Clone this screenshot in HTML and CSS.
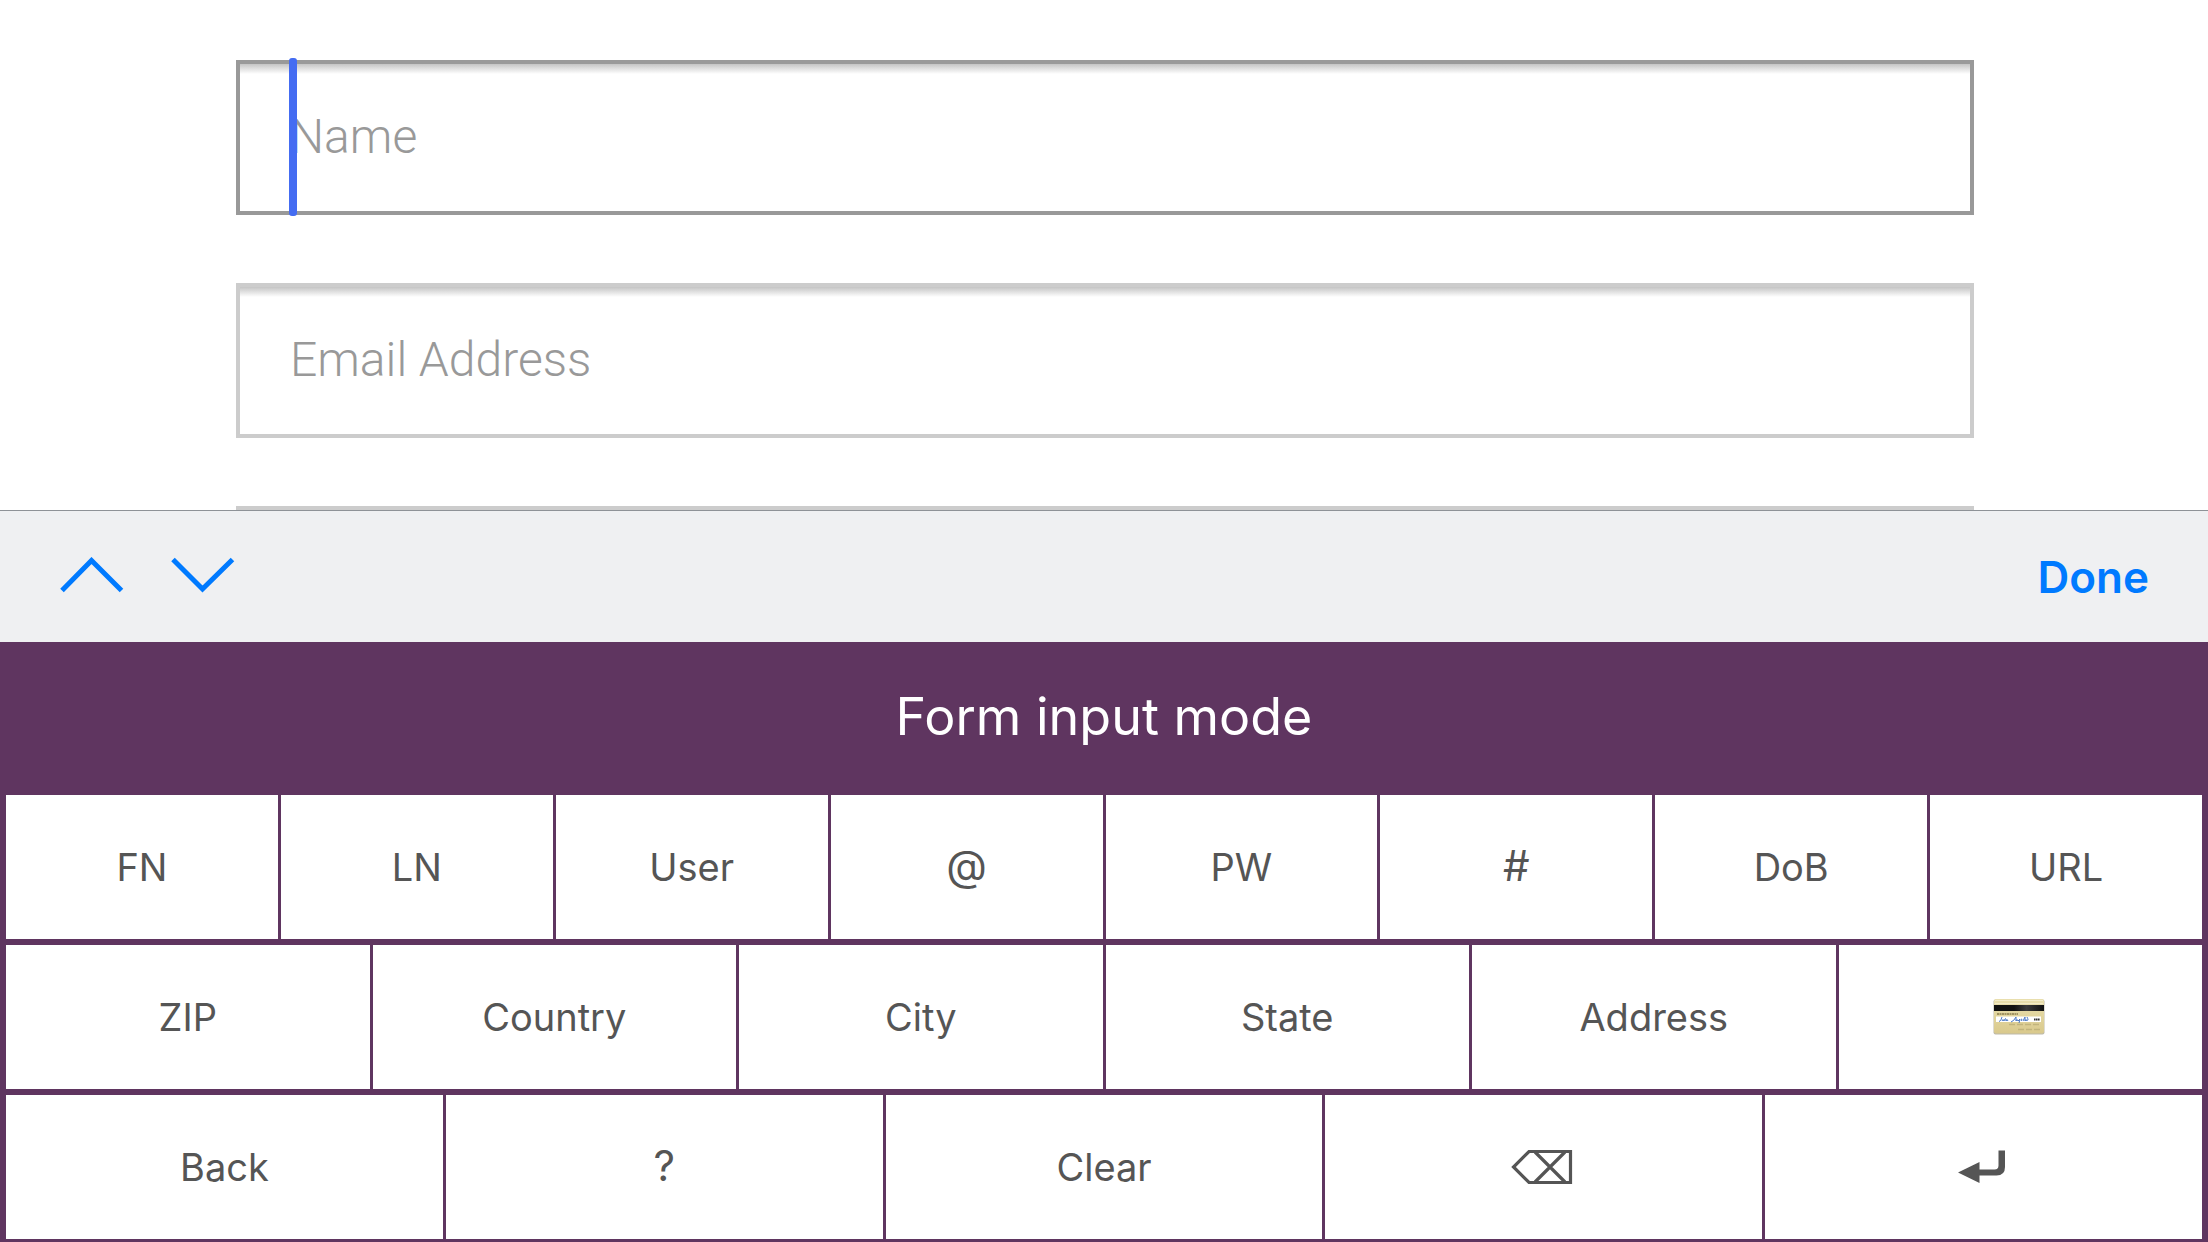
FILE: index.html
```html
<!DOCTYPE html>
<html lang="en">
<head>
<meta charset="utf-8">
<meta name="viewport" content="width=device-width, initial-scale=1">
<title>Form input mode</title>
<link rel="stylesheet" href="styles.css">
</head>
<body>
<form class="form">
  <div class="field field-active">
    <input class="field-input" type="text" name="name" placeholder="Name" aria-label="Name">
    <span class="caret"></span>
  </div>
  <div class="field">
    <input class="field-input" type="email" name="email" placeholder="Email Address" aria-label="Email Address">
  </div>
  <div class="field">
    <input class="field-input" type="text" name="details" aria-label="Details">
  </div>
</form>
<div class="toolbar">
  <div class="toolbar-nav">
    <button class="nav-button" type="button" aria-label="Previous field">
      <svg width="64" height="36" viewBox="0 0 64 36"><path d="M2 33.500 31.500 3.500 61.500 33.500" fill="none" stroke="currentColor" stroke-width="5"/></svg>
    </button>
    <button class="nav-button" type="button" aria-label="Next field">
      <svg width="64" height="36" viewBox="0 0 64 36"><path d="M2 2.500 31.500 32 61.500 2.500" fill="none" stroke="currentColor" stroke-width="5"/></svg>
    </button>
  </div>
  <button class="done" type="button">Done</button>
</div>
<section class="keyboard">
  <h1 class="keyboard-title">Form input mode</h1>
  <div class="keys">
    <div class="key-row">
      <button class="key" type="button">FN</button>
      <button class="key" type="button">LN</button>
      <button class="key" type="button">User</button>
      <button class="key key-symbol" type="button">@</button>
      <button class="key" type="button">PW</button>
      <button class="key key-symbol" type="button">#</button>
      <button class="key" type="button">DoB</button>
      <button class="key" type="button">URL</button>
    </div>
    <div class="key-row">
      <button class="key" type="button">ZIP</button>
      <button class="key" type="button">Country</button>
      <button class="key" type="button">City</button>
      <button class="key" type="button">State</button>
      <button class="key" type="button">Address</button>
      <button class="key key-icon" type="button" aria-label="Credit card">
        <svg width="52" height="37" viewBox="0 0 52 37">
          <defs>
            <linearGradient id="card" x1="0" y1="0" x2="0" y2="1"><stop offset="0" stop-color="#e9dfae"/><stop offset="1" stop-color="#d9c98c"/></linearGradient>
            <linearGradient id="stripe" x1="0" y1="0" x2="1" y2="0"><stop offset="0" stop-color="#111"/><stop offset=".4" stop-color="#111"/><stop offset=".65" stop-color="#3a3a3a"/><stop offset="1" stop-color="#111"/></linearGradient>
          </defs>
          <rect x=".5" y="1.500" width="51" height="35" rx="2" fill="#bdb9aa"/>
          <rect x="1" y="1" width="50" height="34.500" rx="2" fill="url(#card)"/>
          <path d="M2 2.500h48M2 5.500h48" stroke="#f3ecc9"/>
          <path d="M1 7h50v6H1z" fill="url(#stripe)"/>
          <path d="M4 16h21" stroke="#8b7d4f" stroke-width="1.500" stroke-dasharray="2 .5"/>
          <path d="M3 18.500h45v5.500H3z" fill="#fff"/>
          <path d="M6 23.500q2 0 3-4.500M9 23q1-3 2 0 2-5 2 0 1-3 2 0M18 24q3-1 5-5v4q1-3 2 0l2-2-1 4M28 21q2 0 0 2M30 23l2-4v4q1-3 2 0M34 22q2 1 0-3" fill="none" stroke="#4a78c8" stroke-width="1"/>
          <path d="M41 21.500h6" stroke="#333" stroke-width="2" stroke-dasharray="1.500 .4"/>
          <path d="M16 26.500h32M25 31.500h23" stroke="#c2b47c" stroke-width="1.500" stroke-dasharray="6 2"/>
        </svg>
      </button>
    </div>
    <div class="key-row">
      <button class="key" type="button">Back</button>
      <button class="key key-symbol" type="button">?</button>
      <button class="key" type="button">Clear</button>
      <button class="key key-icon" type="button" aria-label="Delete">
        <svg width="62" height="36" viewBox="0 0 62 36"><path d="M18 2.500H59.500V33.500H18L2.500 18ZM24 3 54 33M54 3 24 33" fill="none" stroke="currentColor" stroke-width="3.200"/></svg>
      </button>
      <button class="key key-icon" type="button" aria-label="Return">
        <svg width="48" height="34" viewBox="0 0 48 34"><path d="M0 22.500 21.500 12V19.500H36.500Q40.500 19.500 40.500 15.500V.5H47V17Q47 25.500 38.500 25.500H21.500V33Z" fill="currentColor"/></svg>
      </button>
    </div>
  </div>
</section>
</body>
</html>
```

FILE: styles.css
```css
* {
  box-sizing: border-box;
}

body {
  margin: 0;
  height: 100vh;
  display: flex;
  flex-direction: column;
  background: #fff;
  font-family: Inter, "Liberation Sans", sans-serif;
}

button {
  margin: 0;
  padding: 0;
  border: 0;
  background: none;
  font: inherit;
}

svg {
  display: block;
}

/* Form */
.form {
  flex: 1;
  min-height: 0;
  overflow: hidden;
  display: flex;
  flex-direction: column;
  gap: 68px;
  padding: 60px 234px 0 236px;
}

.field {
  position: relative;
  flex: none;
}

.field-input {
  display: block;
  width: 100%;
  height: 155px;
  margin: 0;
  padding: 0 50px 2px;
  border: 4px solid #ccc;
  border-radius: 0;
  outline: 0;
  background: linear-gradient(#c4c4c4, #fff) 0 0 / 100% 10px no-repeat #fff;
  color: #555;
  font: 300 48px Roboto, sans-serif;
}

.field-active .field-input {
  border-color: #999;
}

.field-input::placeholder {
  color: #999;
  opacity: 1;
}

.caret {
  position: absolute;
  top: -2px;
  bottom: -1px;
  left: 53px;
  width: 8px;
  border-radius: 3px;
  background: #446cf2;
}

/* Toolbar */
.toolbar {
  flex: none;
  display: flex;
  align-items: center;
  justify-content: space-between;
  height: 132px;
  padding: 0 59px 0 60px;
  border-top: 1px solid #8e9297;
  background: #eff0f2;
  color: #007aff;
}

.toolbar-nav {
  display: flex;
  gap: 47px;
  padding-bottom: 3px;
}

.nav-button,
.done {
  color: inherit;
}

.done {
  font-size: 44px;
  font-weight: 600;
}

/* Keyboard */
.keyboard {
  flex: none;
  background: #5f3560;
}

.keyboard-title {
  margin: 0;
  padding-bottom: 3px;
  color: #fff;
  font-size: 52px;
  font-weight: 400;
  line-height: 150px;
  text-align: center;
}

.keys {
  display: grid;
  gap: 6px;
  padding: 0 6px 3px;
}

.key-row {
  display: grid;
  grid-auto-flow: column;
  grid-auto-columns: minmax(0, 1fr);
  gap: 3px;
}

.key {
  height: 144px;
  display: flex;
  align-items: center;
  justify-content: center;
  background: #fff;
  color: #555;
  font-size: 38px;
}

.key-symbol {
  padding-bottom: 4px;
  font-size: 42px;
}

.key-icon {
  padding: 0 3px 1px 0;
}
```
